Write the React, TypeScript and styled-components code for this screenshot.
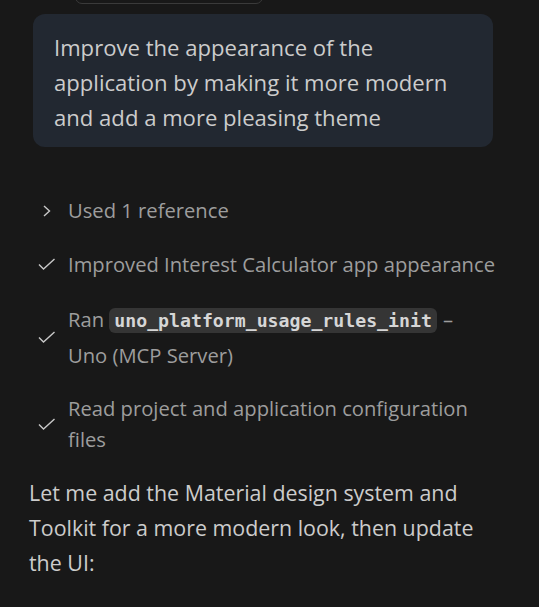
import React from "react";
import styled, { createGlobalStyle } from "styled-components";

const Global = createGlobalStyle`
  html, body { margin: 0; padding: 0; background: #181818; }
  body { font-family: "Open Sans", "Noto Sans", sans-serif; color: #cccccc; overflow: hidden; }
`;

const Page = styled.div`
  width: 539px;
  min-height: 607px;
  background: #181818;
  display: flex;
  flex-direction: column;
  padding: 0 42px 0 33px;
  box-sizing: border-box;
  & > * { flex-shrink: 0; }
`;

const TopChip = styled.div`
  margin-left: 42px;
  margin-top: -20px;
  width: 188px;
  height: 24px;
  border: 1px solid #3a3a3a;
  border-radius: 7px;
  box-sizing: border-box;
`;

const Bubble = styled.div`
  margin-top: 10px;
  margin-right: 4px;
  background: #222831;
  border-radius: 12px;
  padding: 16px 20px 12px 21px;
  font-size: 22.1px;
  line-height: 35px;
  color: #cccccc;
`;

const Steps = styled.div`
  margin-top: 47px;
  display: flex;
  flex-direction: column;
  gap: 21px;
`;

const Step = styled.div`
  display: flex;
  align-items: center;
  color: #9d9d9d;
  font-size: 20.2px;
`;

const IconCell = styled.div`
  width: 27px;
  flex: 0 0 27px;
  margin-right: 8px;
  display: flex;
  justify-content: center;
  color: #c8c8c8;
`;

const StepText = styled.div<{ $lh: number }>`
  flex: 1;
  line-height: ${(p) => p.$lh}px;
`;

const Code = styled.code`
  font-family: "DejaVu Sans Mono", "Liberation Mono", monospace;
  font-weight: bold;
  font-size: 18.2px;
  color: #d6d6d6;
  background: #353535;
  border-radius: 6px;
  padding: 2px 5px;
  margin: 0 1px 0 0;
`;

const Para = styled.p`
  margin: 20px 0 0 -4px;
  font-size: 21.4px;
  line-height: 35px;
  color: #cccccc;
`;

const Chevron = () => (
  <svg width="10" height="12" viewBox="0 0 10 12" fill="none">
    <path d="M2 1 L7.5 6 L2 11" stroke="currentColor" strokeWidth="1.4" />
  </svg>
);

const Check = () => (
  <svg width="18" height="13" viewBox="0 0 18 13" fill="none">
    <path d="M1 6.5 L5.5 11 L16.5 1" stroke="currentColor" strokeWidth="1.4" />
  </svg>
);

export default function App() {
  return (
    <Page>
      <Global />
      <TopChip />
      <Bubble>
        Improve the appearance of the application by making it more modern and add a more pleasing theme
      </Bubble>
      <Steps>
        <Step>
          <IconCell><Chevron /></IconCell>
          <StepText $lh={33}>Used 1 reference</StepText>
        </Step>
        <Step>
          <IconCell><Check /></IconCell>
          <StepText $lh={33}>Improved Interest Calculator app appearance</StepText>
        </Step>
        <Step>
          <IconCell><Check /></IconCell>
          <StepText $lh={34}>
            Ran <Code>uno_platform_usage_rules_init</Code> – Uno (MCP Server)
          </StepText>
        </Step>
        <Step>
          <IconCell><Check /></IconCell>
          <StepText $lh={31}>Read project and application configuration files</StepText>
        </Step>
      </Steps>
      <Para>
        Let me add the Material design system and Toolkit for a more modern look, then update the UI:
      </Para>
    </Page>
  );
}
